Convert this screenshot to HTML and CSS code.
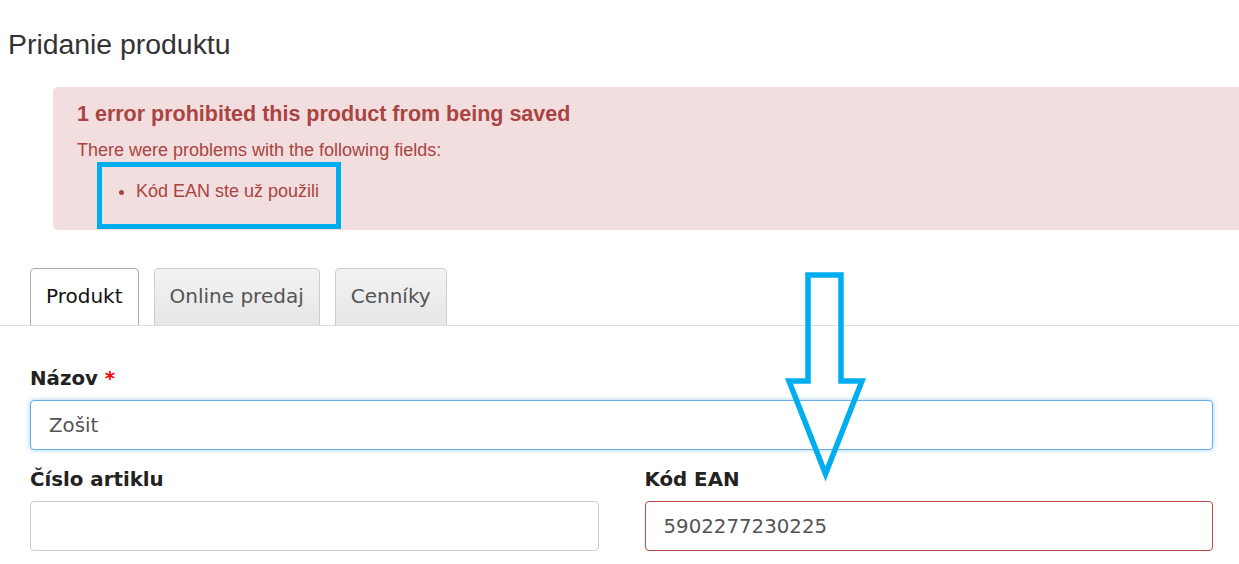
FILE: index.html
```html
<!DOCTYPE html>
<html lang="sk">
<head>
  <meta charset="UTF-8" />
  <meta name="viewport" content="width=device-width, initial-scale=1.0"/>
  <title>Pridanie produktu</title>
  <link rel="stylesheet" href="styles.css">
</head>
<body>
  <h1 class="page-title">Pridanie produktu</h1>

  <div class="alert">
    <h2>1 error prohibited this product from being saved</h2>
    <p>There were problems with the following fields:</p>
    <ul class="errors">
      <li>Kód EAN ste už použili</li>
    </ul>
  </div>

  <ul class="tabs">
    <li class="tab active">Produkt</li>
    <li class="tab">Online predaj</li>
    <li class="tab">Cenníky</li>
  </ul>

  <form class="product-form">
    <div class="field">
      <label for="name">Názov <span class="req">*</span></label>
      <input type="text" id="name" class="focused" value="Zošit" />
    </div>
    <div class="row">
      <div class="field">
        <label for="sku">Číslo artiklu</label>
        <input type="text" id="sku" />
      </div>
      <div class="field">
        <label for="ean">Kód EAN</label>
        <input type="text" id="ean" class="invalid" value="5902277230225" />
      </div>
    </div>
  </form>

  <!-- annotation arrow pointing at the EAN field -->
  <svg class="arrow" width="90" height="222" viewBox="0 0 90 222">
    <polygon points="28,9 61,9 61,115 82,115 45.5,208 9,115 28,115" fill="none" stroke="#00aeef" stroke-width="5.5" />
  </svg>
</body>
</html>
```

FILE: styles.css
```css
body { margin: 0; background: #fff; overflow: hidden; position: relative; font-family: "DejaVu Sans", Verdana, sans-serif; }

.page-title { margin: 0; padding: 27px 8px 0; font: normal 28.4px/34px "Liberation Sans", Arial, sans-serif; color: #333; }

.alert { margin: 26px -30px 0 53px; padding: 15px 24px 1px; background: #f2dede; color: #a94442; border-radius: 5px; font-family: "Liberation Sans", Arial, sans-serif; }
.alert h2 { margin: 0; font-size: 21.5px; line-height: 24px; font-weight: bold; }
.alert p { margin: 14px 0 0; font-size: 18px; line-height: 21px; }
.errors { display: inline-block; margin: 1px 0 0 20px; padding: 14px 17px 22px 34px; border: 5px solid #00aeef; font-size: 18px; line-height: 21px; }

.tabs { display: flex; gap: 15px; margin: 38px 0 0; padding: 0 0 0 30px; list-style: none; border-bottom: 1px solid #ddd; }
.tab { padding: 16px 15px 17px; font-size: 20px; line-height: 23px; color: #555; border: 1px solid #ccc; border-bottom: none; border-radius: 5px 5px 0 0; background: linear-gradient(#f3f3f3, #e6e6e6); }
.tab.active { color: #111; background: #fff; border-color: #aaa; }

.product-form { padding: 41px 26px 0 30px; }
.row { display: flex; gap: 46px; margin-top: 18px; }
.row .field { flex: 1; }
.field label { display: block; font-size: 19.8px; line-height: 24px; font-weight: bold; color: #222; }
.req { color: #f00; }
.field input { display: block; box-sizing: border-box; width: 100%; height: 50px; margin-top: 9px; padding: 0 18px; font: 19.8px "DejaVu Sans", Verdana, sans-serif; color: #555; border: 1px solid #ccc; border-radius: 4px; background: #fff; }
.field input.focused { border-color: #66afe9; box-shadow: 0 0 5px rgba(102, 175, 233, 0.6); }
.field input.invalid { border-color: #b94a48; }

.arrow { position: absolute; left: 780px; top: 266px; pointer-events: none; }
```
